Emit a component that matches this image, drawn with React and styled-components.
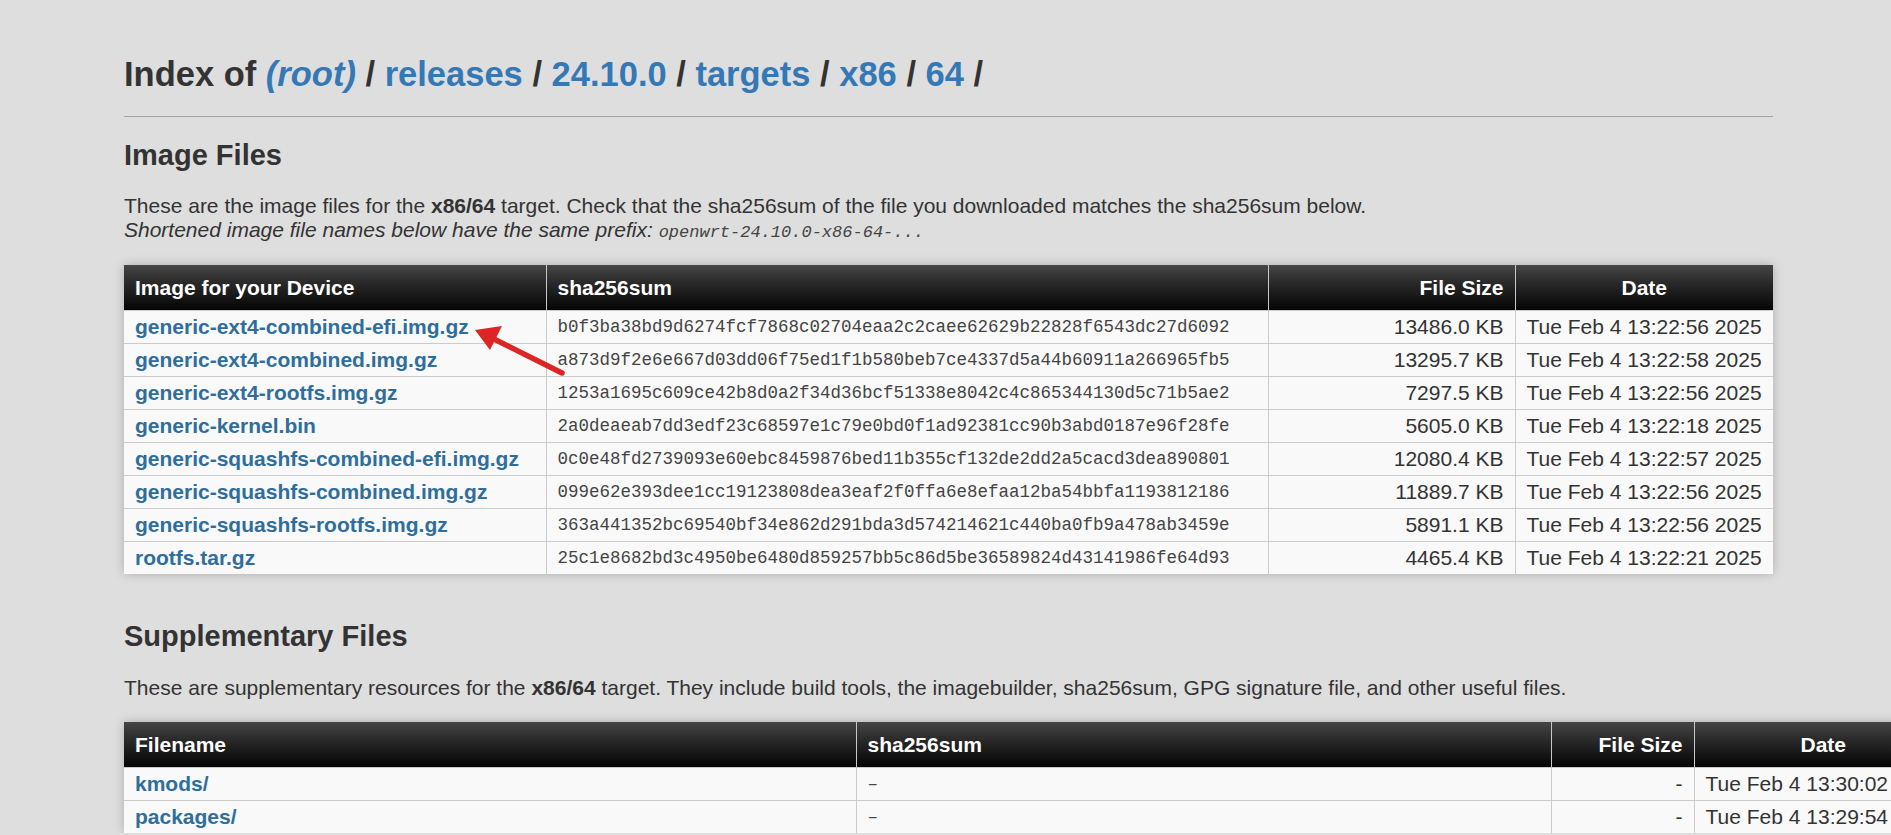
import React from 'react';
import styled, { createGlobalStyle } from 'styled-components';

const GlobalStyle = createGlobalStyle`
  html {
    overflow: hidden;
  }
  body {
    margin: 0;
    background: #dedede;
    color: #333;
    font-family: "Liberation Sans", Arial, sans-serif;
    font-size: 21px;
  }
`

const Page = styled.div`
  width: 1649px;
  margin-left: 124px;
  padding-top: 54px;
`

const Title = styled.h1`
  margin: 0;
  font-size: 34.5px;
  line-height: 41px;
  font-weight: bold;
  color: #333;
  white-space: nowrap;
`

const TitleLink = styled.a`
  color: #3479b5;
  text-decoration: none;
  font-style: ${p => p.$italic ? 'italic' : 'normal'};
`

const Rule = styled.hr`
  margin: 21px 0 0;
  border: 0;
  border-top: 1px solid #a3a3a3;
  height: 0;
`

const Heading = styled.h2`
  margin: ${p => p.$top}px 0 0;
  font-size: 29px;
  line-height: 35px;
  font-weight: bold;
  color: #333;
`

const Para = styled.p`
  margin: ${p => p.$top}px 0 0;
  line-height: 24px;
  white-space: nowrap;
`

const Note = styled.em`
  font-style: italic;
`

const Code = styled.code`
  font-family: "Liberation Mono", "Courier New", monospace;
  font-size: 17px;
  color: #444;
`

const TableWrap = styled.div`
  position: relative;
  margin-top: ${p => p.$top}px;
  width: ${p => p.$width}px;
  box-shadow: 0 0 10px rgba(0, 0, 0, 0.22);
`

const Table = styled.table`
  width: 100%;
  border-collapse: collapse;
  table-layout: fixed;
`

const Th = styled.th`
  background: linear-gradient(to bottom, #454545 0%, #262626 45%, #050505 100%);
  color: #fff;
  font-weight: bold;
  padding: 11px 11px 10px;
  line-height: 24px;
  text-align: ${p => p.$align || 'left'};
  border-left: 1px solid #c8c8c8;
  &:first-child {
    border-left: 0;
  }
`

const Td = styled.td`
  background: #f9f9f9;
  padding: 4px 11px 4px;
  line-height: 24px;
  height: 24px;
  border-top: 1px solid #cbcbcb;
  border-left: 1px solid #cbcbcb;
  text-align: ${p => p.$align || 'left'};
  white-space: nowrap;
  overflow: hidden;
  &:first-child {
    border-left: 0;
  }
`

const Hash = styled(Td)`
  font-family: "Liberation Mono", "Courier New", monospace;
  font-size: 17.5px;
  color: #444;
`

const FileLink = styled.a`
  color: #2f6e9c;
  font-weight: bold;
  text-decoration: none;
`

const Arrow = styled.svg`
  position: absolute;
  left: 340px;
  top: 52px;
  pointer-events: none;
`

const images = [
  ['generic-ext4-combined-efi.img.gz', 'b0f3ba38bd9d6274fcf7868c02704eaa2c2caee62629b22828f6543dc27d6092', '13486.0 KB', 'Tue Feb 4 13:22:56 2025'],
  ['generic-ext4-combined.img.gz', 'a873d9f2e6e667d03dd06f75ed1f1b580beb7ce4337d5a44b60911a266965fb5', '13295.7 KB', 'Tue Feb 4 13:22:58 2025'],
  ['generic-ext4-rootfs.img.gz', '1253a1695c609ce42b8d0a2f34d36bcf51338e8042c4c865344130d5c71b5ae2', '7297.5 KB', 'Tue Feb 4 13:22:56 2025'],
  ['generic-kernel.bin', '2a0deaeab7dd3edf23c68597e1c79e0bd0f1ad92381cc90b3abd0187e96f28fe', '5605.0 KB', 'Tue Feb 4 13:22:18 2025'],
  ['generic-squashfs-combined-efi.img.gz', '0c0e48fd2739093e60ebc8459876bed11b355cf132de2dd2a5cacd3dea890801', '12080.4 KB', 'Tue Feb 4 13:22:57 2025'],
  ['generic-squashfs-combined.img.gz', '099e62e393dee1cc19123808dea3eaf2f0ffa6e8efaa12ba54bbfa1193812186', '11889.7 KB', 'Tue Feb 4 13:22:56 2025'],
  ['generic-squashfs-rootfs.img.gz', '363a441352bc69540bf34e862d291bda3d574214621c440ba0fb9a478ab3459e', '5891.1 KB', 'Tue Feb 4 13:22:56 2025'],
  ['rootfs.tar.gz', '25c1e8682bd3c4950be6480d859257bb5c86d5be36589824d43141986fe64d93', '4465.4 KB', 'Tue Feb 4 13:22:21 2025'],
]

const extras = [
  ['kmods/', '–', '-', 'Tue Feb 4 13:30:02 2025'],
  ['packages/', '–', '-', 'Tue Feb 4 13:29:54 2025'],
]

function App() {
  return (
    <Page>
      <GlobalStyle />
      <Title>
        Index of <TitleLink href="#" $italic>(root)</TitleLink> / <TitleLink href="#">releases</TitleLink> / <TitleLink href="#">24.10.0</TitleLink> / <TitleLink href="#">targets</TitleLink> / <TitleLink href="#">x86</TitleLink> / <TitleLink href="#">64</TitleLink> /
      </Title>
      <Rule />

      <Heading $top={21}>Image Files</Heading>
      <Para $top={21}>
        These are the image files for the <b>x86/64</b> target. Check that the sha256sum of the file you downloaded matches the sha256sum below.<br />
        <Note>Shortened image file names below have the same prefix: <Code>openwrt-24.10.0-x86-64-...</Code></Note>
      </Para>

      <TableWrap $top={20} $width={1649}>
        <Table>
          <colgroup>
            <col style={{ width: 422 }} />
            <col style={{ width: 722 }} />
            <col style={{ width: 247 }} />
            <col style={{ width: 258 }} />
          </colgroup>
          <thead>
            <tr>
              <Th>Image for your Device</Th>
              <Th>sha256sum</Th>
              <Th $align="right">File Size</Th>
              <Th $align="center">Date</Th>
            </tr>
          </thead>
          <tbody>
            {images.map(row => (
              <tr key={row[0]}>
                <Td><FileLink href="#">{row[0]}</FileLink></Td>
                <Hash>{row[1]}</Hash>
                <Td $align="right">{row[2]}</Td>
                <Td>{row[3]}</Td>
              </tr>
            ))}
          </tbody>
        </Table>
        <Arrow width="110" height="70" viewBox="0 0 110 70">
          <line x1="98" y1="56" x2="30" y2="22" stroke="#dc2626" strokeWidth="5.5" strokeLinecap="round" />
          <polygon points="11,13 38,9 26,33" fill="#dc2626" />
        </Arrow>
      </TableWrap>

      <Heading $top={45}>Supplementary Files</Heading>
      <Para $top={22}>
        These are supplementary resources for the <b>x86/64</b> target. They include build tools, the imagebuilder, sha256sum, GPG signature file, and other useful files.
      </Para>

      <TableWrap $top={22} $width={1828}>
        <Table>
          <colgroup>
            <col style={{ width: 732 }} />
            <col style={{ width: 695 }} />
            <col style={{ width: 143 }} />
            <col style={{ width: 258 }} />
          </colgroup>
          <thead>
            <tr>
              <Th>Filename</Th>
              <Th>sha256sum</Th>
              <Th $align="right">File Size</Th>
              <Th $align="center">Date</Th>
            </tr>
          </thead>
          <tbody>
            {extras.map(row => (
              <tr key={row[0]}>
                <Td><FileLink href="#">{row[0]}</FileLink></Td>
                <Hash>{row[1]}</Hash>
                <Td $align="right">{row[2]}</Td>
                <Td>{row[3]}</Td>
              </tr>
            ))}
          </tbody>
        </Table>
      </TableWrap>
    </Page>
  );
}

export default App;
